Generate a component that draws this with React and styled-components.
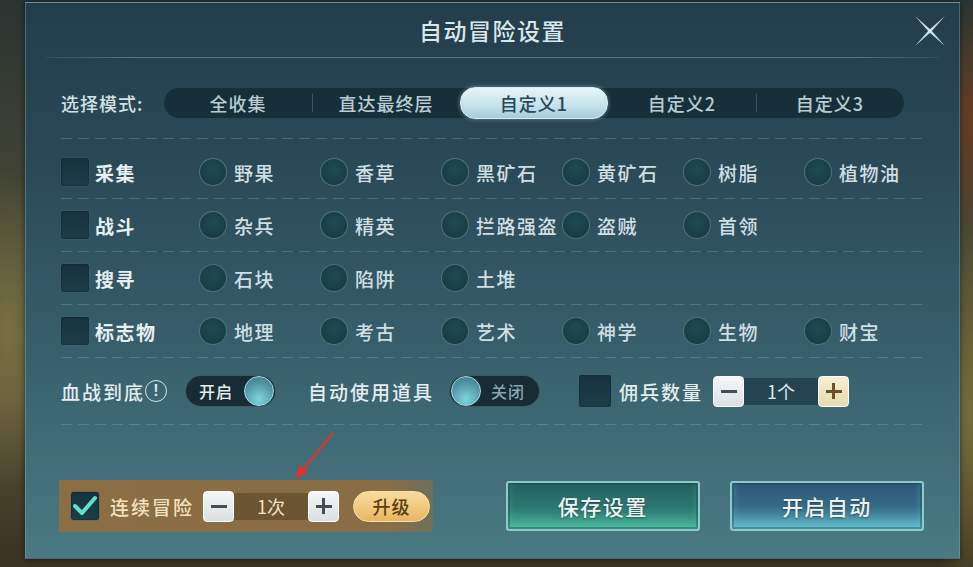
import React from 'react';
import styled, { createGlobalStyle, css } from 'styled-components';

const Global = createGlobalStyle`
  body {
    margin: 0;
    background: #2c2e24;
    font-family: "Noto Sans CJK SC", "Noto Sans", sans-serif;
  }
`;

const Stage = styled.div`
  position: relative;
  width: 973px;
  height: 567px;
  overflow: hidden;
  box-sizing: border-box;
  padding: 2px 14px 8px 25px;
  background:
    radial-gradient(ellipse 60px 160px at 8px 330px, rgba(150,140,80,.55), transparent),
    radial-gradient(ellipse 40px 120px at 968px 120px, rgba(120,60,30,.7), transparent),
    radial-gradient(ellipse 40px 200px at 968px 420px, rgba(130,120,60,.7), transparent),
    linear-gradient(180deg, #2a3432 0%, #4b4a34 45%, #5a5236 70%, #3a3222 100%);
`;

const Panel = styled.div`
  position: relative;
  width: 935px;
  height: 557px;
  box-sizing: border-box;
  padding: 0 35px;
  display: flex;
  flex-direction: column;
  border: 1px solid rgba(140, 190, 200, 0.35);
  background: linear-gradient(180deg, #233d4b 0%, #2b4a58 30%, #375f6b 62%, #4a7a83 100%);
  box-shadow: 0 0 6px rgba(0,0,0,.5);
  color: #dbe7ea;
`;

const Header = styled.div`
  height: 54px;
  display: flex;
  align-items: center;
  justify-content: center;
  font-size: 23px;
  font-weight: 500;
  letter-spacing: 1.5px;
  color: #d9e7eb;
`;

const Close = styled.svg`
  position: absolute;
  right: 12px;
  top: 11px;
`;

const SolidLine = styled.div`
  height: 1px;
  margin: 0 -15px;
  background: linear-gradient(90deg, rgba(150,190,200,.1), rgba(150,190,200,.45) 10%, rgba(150,190,200,.45) 90%, rgba(150,190,200,.1));
`;

const Dashed = styled.div`
  height: 1px;
  margin-right: 2px;
  background: repeating-linear-gradient(90deg, rgba(150,190,200,.28) 0 11px, transparent 11px 17px);
`;

const ModeRow = styled.div`
  display: flex;
  align-items: center;
  margin-top: 30px;
  margin-bottom: 20px;
`;

const ModeLabel = styled.div`
  width: 103px;
  font-size: 18px;
  font-weight: 500;
  letter-spacing: 1px;
  color: #d3e1e5;
`;

const Segments = styled.div`
  width: 740px;
  height: 30px;
  display: grid;
  grid-template-columns: repeat(5, 1fr);
  border-radius: 15px;
  background: rgba(18, 40, 50, 0.75);
`;

const Segment = styled.div`
  position: relative;
  display: flex;
  align-items: center;
  justify-content: center;
  font-size: 18px;
  font-weight: 500;
  letter-spacing: 1px;
  color: #b9ccd2;
  ${p => p.$divider && css`
    &::before {
      content: '';
      position: absolute;
      left: 0;
      top: 6px;
      bottom: 6px;
      width: 1px;
      background: rgba(140,180,190,.3);
    }
  `}
  ${p => p.$active && css`
    border-radius: 15px;
    margin: -1px 0;
    color: #2a4858;
    background: linear-gradient(180deg, #e6f4f8 0%, #c4e2ec 60%, #a5cbdb 100%);
    border: 1px solid #d8eef4;
    box-shadow: 0 0 4px rgba(180,220,235,.5);
  `}
`;

const Rows = styled.div`
  margin-top: 7px;
`;

const Row = styled.div`
  height: 52px;
  display: grid;
  grid-template-columns: 138px repeat(6, 121px);
  align-items: center;
`;

const Box = styled.div`
  width: ${p => p.$size || 28}px;
  height: ${p => p.$size || 28}px;
  flex: none;
  box-sizing: border-box;
  border-radius: 3px;
  margin-left: ${p => p.$ml || 0}px;
  background: linear-gradient(180deg, #17333f, #1c3d48);
  box-shadow: inset 0 0 2px rgba(0,0,0,.5), 0 0 0 1px rgba(60,100,110,.35);
  display: flex;
  align-items: center;
  justify-content: center;
`;

const Cat = styled.div`
  display: flex;
  align-items: center;
  gap: 6px;
  font-size: 19px;
  font-weight: 700;
  letter-spacing: 1.5px;
  color: #e7eff1;
`;

const Option = styled.div`
  display: flex;
  align-items: center;
  gap: 7px;
  font-size: 19px;
  font-weight: 500;
  letter-spacing: 1.5px;
  white-space: nowrap;
  color: #cfdfe3;
`;

const Radio = styled.div`
  width: 28px;
  height: 28px;
  flex: none;
  box-sizing: border-box;
  border-radius: 50%;
  background: radial-gradient(circle at 50% 40%, #1f4a52, #163840);
  border: 1px solid rgba(110,150,155,.6);
`;

const SettingRow = styled.div`
  height: 66px;
  display: flex;
  align-items: center;
`;

const Label = styled.div`
  font-size: 19px;
  font-weight: 500;
  letter-spacing: 2px;
  color: ${p => p.$gold ? '#f3e2c0' : '#e4edef'};
  margin-left: ${p => p.$ml || 0}px;
  margin-right: ${p => p.$mr || 0}px;
  white-space: nowrap;
`;

const Info = styled.div`
  width: 22px;
  height: 22px;
  box-sizing: border-box;
  border-radius: 50%;
  border: 1.5px solid #d8e4e8;
  font-size: 16px;
  font-weight: 700;
  line-height: 19px;
  text-align: center;
  color: #d8e4e8;
  margin: 0 18px 0 0;
  font-family: "Liberation Sans", sans-serif;
`;

const Toggle = styled.div`
  width: 91px;
  height: 32px;
  box-sizing: border-box;
  border-radius: 16px;
  border: 1px solid rgba(120,160,170,.4);
  background: #172c34;
  display: flex;
  align-items: center;
  flex-direction: ${p => p.$on ? 'row' : 'row-reverse'};
  justify-content: space-between;
  padding: 0 1px 0 ${p => p.$on ? 13 : 1}px;
  ${p => !p.$on && css`padding-right: 14px;`}
  font-size: 16px;
  font-weight: 500;
  letter-spacing: 1px;
  color: ${p => p.$on ? '#e6eef0' : '#8aa6ad'};
`;

const Knob = styled.div`
  width: 30px;
  height: 30px;
  border-radius: 50%;
  box-sizing: border-box;
  border: 1px solid #a9dbe3;
  background: radial-gradient(circle at 50% 80%, #7fd4de, #4a8e9a 70%, #3d7a86);
`;

const Stepper = styled.div`
  display: flex;
  align-items: center;
`;

const StepBtn = styled.div`
  width: 31px;
  height: 31px;
  box-sizing: border-box;
  border-radius: 4px;
  border: 1px solid #ffffff;
  background: ${p => p.$cream
    ? 'linear-gradient(180deg, #f7f0d4, #e6d9ad)'
    : 'linear-gradient(180deg, #f5f7f8, #d9dfe2)'};
  display: flex;
  align-items: center;
  justify-content: center;
  position: relative;
  &::before, &::after {
    content: '';
    position: absolute;
    background: ${p => p.$cream ? '#6c5226' : '#454d52'};
  }
  &::before { width: 16px; height: 3px; }
  ${p => p.$plus && css`&::after { width: 3px; height: 16px; }`}
`;

const StepValue = styled.div`
  width: 74px;
  height: 27px;
  display: flex;
  align-items: center;
  justify-content: center;
  font-size: 18px;
  color: ${p => p.$gold ? '#f2e2c2' : '#dfe9ec'};
  background: ${p => p.$gold ? '#6c5533' : 'rgba(30,60,72,.8)'};
`;

const Footer = styled.div`
  display: flex;
  align-items: center;
  margin-top: 55px;
`;

const ContinueBar = styled.div`
  width: 375px;
  height: 52px;
  margin-left: -2px;
  box-sizing: border-box;
  padding-left: 12px;
  display: flex;
  align-items: center;
  background: linear-gradient(90deg, #8c6e44 0%, #8a6d45 88%, rgba(138,109,69,.6) 100%);
`;

const Upgrade = styled.div`
  width: 77px;
  height: 31px;
  margin-left: 14px;
  box-sizing: border-box;
  border-radius: 16px;
  border: 1px solid #f8e2a8;
  background: linear-gradient(180deg, #f8dc9c 0%, #efc77a 60%, #e6b563 100%);
  display: flex;
  align-items: center;
  justify-content: center;
  font-size: 18px;
  font-weight: 500;
  letter-spacing: 1px;
  color: #5a3d14;
`;

const ActionButton = styled.div`
  width: 195px;
  height: 50px;
  margin-left: ${p => p.$ml}px;
  box-sizing: border-box;
  border: 2px solid #8fcaca;
  border-radius: 3px;
  box-shadow: inset 0 0 0 2px rgba(20,60,70,.35), inset 0 -8px 10px ${p => p.$blue ? 'rgba(110,210,220,.45)' : 'rgba(90,220,180,.35)'};
  background: ${p => p.$blue
    ? 'linear-gradient(180deg, #2d5778 0%, #366a86 50%, #58aebf 100%)'
    : 'linear-gradient(180deg, #23605f 0%, #2c7570 50%, #44a893 100%)'};
  display: flex;
  align-items: center;
  justify-content: center;
  font-size: 21px;
  font-weight: 500;
  letter-spacing: 1.5px;
  color: #eef4f2;
  text-shadow: 0 1px 2px rgba(0,0,0,.4);
`;

const Arrow = styled.svg`
  position: absolute;
  left: 0;
  top: 0;
  pointer-events: none;
`;

const MODES = ['全收集', '直达最终层', '自定义1', '自定义2', '自定义3'];

const GROUPS = [
  { name: '采集', items: ['野果', '香草', '黑矿石', '黄矿石', '树脂', '植物油'] },
  { name: '战斗', items: ['杂兵', '精英', '拦路强盗', '盗贼', '首领'] },
  { name: '搜寻', items: ['石块', '陷阱', '土堆'] },
  { name: '标志物', items: ['地理', '考古', '艺术', '神学', '生物', '财宝'] },
];

function CloseIcon() {
  return (
    <Close width="34" height="34" viewBox="0 0 34 34">
      <polygon points="2,2 18,16 32,32 16,18" fill="#c9dde3" />
      <polygon points="32,2 18,18 2,32 16,16" fill="#c9dde3" />
      <circle cx="17" cy="17" r="1.8" fill="#dbe9ed" />
    </Close>
  );
}

export default function App() {
  return (
    <Stage>
      <Global />
      <Panel>
        <Header>自动冒险设置</Header>
        <CloseIcon />
        <SolidLine />

        <ModeRow>
          <ModeLabel>选择模式:</ModeLabel>
          <Segments>
            {MODES.map((m, i) => (
              <Segment key={m} $active={i === 2} $divider={i === 1 || i === 4}>{m}</Segment>
            ))}
          </Segments>
        </ModeRow>
        <Dashed />

        <Rows>
          {GROUPS.map(g => (
            <React.Fragment key={g.name}>
              <Row>
                <Cat><Box />{g.name}</Cat>
                {g.items.map(it => (
                  <Option key={it}><Radio />{it}</Option>
                ))}
              </Row>
              <Dashed />
            </React.Fragment>
          ))}
        </Rows>

        <SettingRow>
          <Label>血战到底</Label>
          <Info>!</Info>
          <Toggle $on>开启<Knob /></Toggle>
          <Label $ml={32} $mr={15}>自动使用道具</Label>
          <Toggle>关闭<Knob /></Toggle>
          <Box $size={32} $ml={39} />
          <Label $ml={8} $mr={10}>佣兵数量</Label>
          <Stepper>
            <StepBtn />
            <StepValue>1个</StepValue>
            <StepBtn $plus $cream />
          </Stepper>
        </SettingRow>
        <Dashed />

        <Footer>
          <ContinueBar>
            <Box>
              <svg width="24" height="22" viewBox="0 0 24 22">
                <path d="M2 11 L9 18 L22 3" fill="none" stroke="#5fe3c8" strokeWidth="4" strokeLinecap="round" strokeLinejoin="round" />
              </svg>
            </Box>
            <Label $gold $ml={11} $mr={9}>连续冒险</Label>
            <Stepper>
              <StepBtn />
              <StepValue $gold>1次</StepValue>
              <StepBtn $plus />
            </Stepper>
            <Upgrade>升级</Upgrade>
          </ContinueBar>
          <ActionButton $ml={73}>保存设置</ActionButton>
          <ActionButton $ml={30} $blue>开启自动</ActionButton>
        </Footer>
      </Panel>

      <Arrow width="973" height="567" viewBox="0 0 973 567">
        <line x1="333" y1="433" x2="302" y2="471" stroke="#e8302a" strokeWidth="2" />
        <polygon points="296,479 299,465 308,472" fill="#e8302a" />
      </Arrow>
    </Stage>
  );
}
